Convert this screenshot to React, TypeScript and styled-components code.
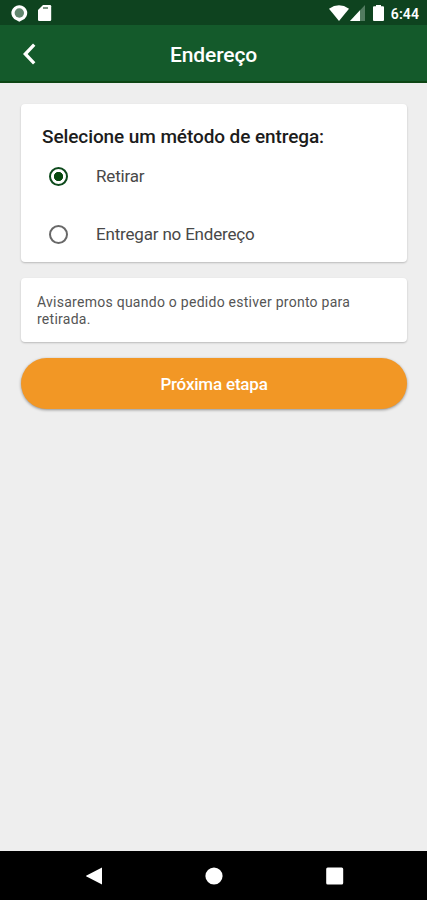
import React, { useState } from "react";
import styled, { createGlobalStyle } from "styled-components";

const GlobalStyle = createGlobalStyle`
  * { box-sizing: border-box; }
  body { margin: 0; background: #eeeeee; font-family: Roboto, "Liberation Sans", sans-serif; }
`;

const Screen = styled.div`
  width: 427px;
  height: 900px;
  display: flex;
  flex-direction: column;
  background: #eeeeee;
  overflow: hidden;
`;

const StatusBar = styled.div`
  height: 25px;
  flex: none;
  display: flex;
  align-items: center;
  justify-content: space-between;
  padding: 1px 8px 0 11px;
  background: #0e431f;
  color: #fff;
`;

const StatusGroup = styled.div`
  display: flex;
  align-items: center;
`;

const StatusIcon = styled.svg<{ $gap?: number }>`
  display: block;
  margin-right: ${(p) => p.$gap ?? 0}px;
`;

const Clock = styled.span`
  margin-top: 2px;
  font-size: 14px;
  line-height: 17px;
  font-weight: 600;
  letter-spacing: 0.1px;
`;

const AppBar = styled.header`
  height: 58px;
  flex: none;
  display: grid;
  grid-template-columns: 60px 1fr 60px;
  align-items: center;
  background: #145a2b;
  border-bottom: 2px solid #0d4614;
  color: #fff;
`;

const BackButton = styled.button`
  border: 0;
  padding: 2px 0 0 22px;
  background: none;
  color: inherit;
  height: 56px;
`;

const Title = styled.h1`
  margin: 4px 0 0;
  text-align: center;
  font-size: 21px;
  line-height: 28px;
  font-weight: 500;
  letter-spacing: -0.1px;
`;

const Content = styled.main`
  flex: 1;
  display: flex;
  flex-direction: column;
  gap: 16px;
  padding: 21px 20px 0 21px;
`;

const Card = styled.section<{ $height: number; $padding: string }>`
  height: ${(p) => p.$height}px;
  padding: ${(p) => p.$padding};
  background: #fff;
  border-radius: 4px;
  box-shadow: 0 1px 2px rgba(0, 0, 0, 0.22);
`;

const Heading = styled.h2`
  margin: 0;
  font-size: 19px;
  line-height: 24px;
  font-weight: 500;
  letter-spacing: -0.09px;
  color: #1c1c1c;
`;

const Options = styled.div`
  display: grid;
  grid-template-rows: 54px 62px;
`;

const Option = styled.label`
  display: flex;
  align-items: center;
  padding-left: 7px;
  gap: 28px;
  color: #484848;
  font-size: 17px;
  line-height: 22px;
  letter-spacing: -0.18px;
`;

const Radio = styled.input`
  appearance: none;
  margin: 0;
  width: 19px;
  height: 19px;
  flex: none;
  border: 2px solid #686868;
  border-radius: 50%;
  &:checked {
    border-color: #0d4a1c;
    background: radial-gradient(circle, #07490f 4.3px, transparent 5px);
  }
`;

const Notice = styled.p`
  margin: 0;
  font-size: 14px;
  line-height: 17px;
  letter-spacing: 0.26px;
  color: #555;
`;

const NextButton = styled.button`
  height: 51px;
  border: 0;
  border-radius: 26px;
  background: #f29725;
  color: #fff;
  font: 500 17px/22px Roboto, "Liberation Sans", sans-serif;
  letter-spacing: -0.2px;
  box-shadow: 0 1px 3px rgba(0, 0, 0, 0.4);
`;

const NavBar = styled.nav`
  height: 49px;
  flex: none;
  display: grid;
  grid-template-columns: 1fr 18px 1fr;
  align-items: center;
  background: #000;
`;

const NavIcon = styled.svg<{ $margin?: string }>`
  display: block;
  margin: ${(p) => p.$margin ?? "0"};
`;

const options = ["Retirar", "Entregar no Endereço"];

export default function App() {
  const [method, setMethod] = useState(options[0]);
  return (
    <>
      <GlobalStyle />
      <Screen>
        <StatusBar>
          <StatusGroup>
            <StatusIcon $gap={10} width="17" height="17" viewBox="0 0 17 17">
              <path d="M8.3 .3a7.7 7.7 0 0 1 3.2 14.800L8.3 16.700 5.100 15.100A7.7 7.7 0 0 1 8.3 .3z" fill="#fff" />
              <circle cx="8.3" cy="8" r="4.7" fill="#61866e" />
            </StatusIcon>
            <StatusIcon width="14" height="16" viewBox="0 0 14 16">
              <path d="M5 0h7q1.2 0 1.2 1.2v13.6q0 1.2-1.2 1.2H1.3Q0 16 0 14.8V5z" fill="#fff" />
              <path d="M5 3h5" stroke="#52725d" strokeWidth="1.5" />
            </StatusIcon>
          </StatusGroup>
          <StatusGroup>
            <StatusIcon $gap={1} width="20" height="16" viewBox="0 0 20 16">
              <path d="M0 3.7Q10-3.2 20 3.7L10 16z" fill="#fff" />
            </StatusIcon>
            <StatusIcon $gap={8} width="15" height="16" viewBox="0 0 15 16">
              <path d="M15 0v16H0z" fill="#527b60" />
              <path d="M10 5.3V16H0z" fill="#fff" />
            </StatusIcon>
            <StatusIcon $gap={7} width="11" height="16" viewBox="0 0 11 16">
              <path d="M3 0h5v1.2h2q1 0 1 1V15q0 1-1 1H1q-1 0-1-1V2.200q0-1 1-1h2z" fill="#fff" />
            </StatusIcon>
            <Clock>6:44</Clock>
          </StatusGroup>
        </StatusBar>
        <AppBar>
          <BackButton aria-label="Voltar">
            <svg width="14" height="22" viewBox="0 0 14 22" display="block">
              <path d="M12.200 1.700 3.300 11l8.900 9.300" fill="none" stroke="#fff" strokeWidth="3.3" />
            </svg>
          </BackButton>
          <Title>Endereço</Title>
        </AppBar>
        <Content>
          <Card $height={158} $padding="21px 21px 0">
            <Heading>Selecione um método de entrega:</Heading>
            <Options>
              {options.map((name) => (
                <Option key={name}>
                  <Radio type="radio" name="method" checked={method === name} onChange={() => setMethod(name)} />
                  {name}
                </Option>
              ))}
            </Options>
          </Card>
          <Card $height={64} $padding="16px">
            <Notice>Avisaremos quando o pedido estiver pronto para retirada.</Notice>
          </Card>
          <NextButton>Próxima etapa</NextButton>
        </Content>
        <NavBar>
          <NavIcon $margin="0 0 0 86px" width="17" height="18" viewBox="0 0 17 18">
            <path d="M16 .5v17L.5 9.500q-.8-.5 0-1z" fill="#fff" />
          </NavIcon>
          <NavIcon width="18" height="18" viewBox="0 0 18 18">
            <circle cx="9" cy="9" r="8.600" fill="#fff" />
          </NavIcon>
          <NavIcon $margin="0 0 0 103px" width="18" height="18" viewBox="0 0 18 18">
            <rect x=".2" y=".5" width="17" height="17" rx="1.500" fill="#fff" />
          </NavIcon>
        </NavBar>
      </Screen>
    </>
  );
}
